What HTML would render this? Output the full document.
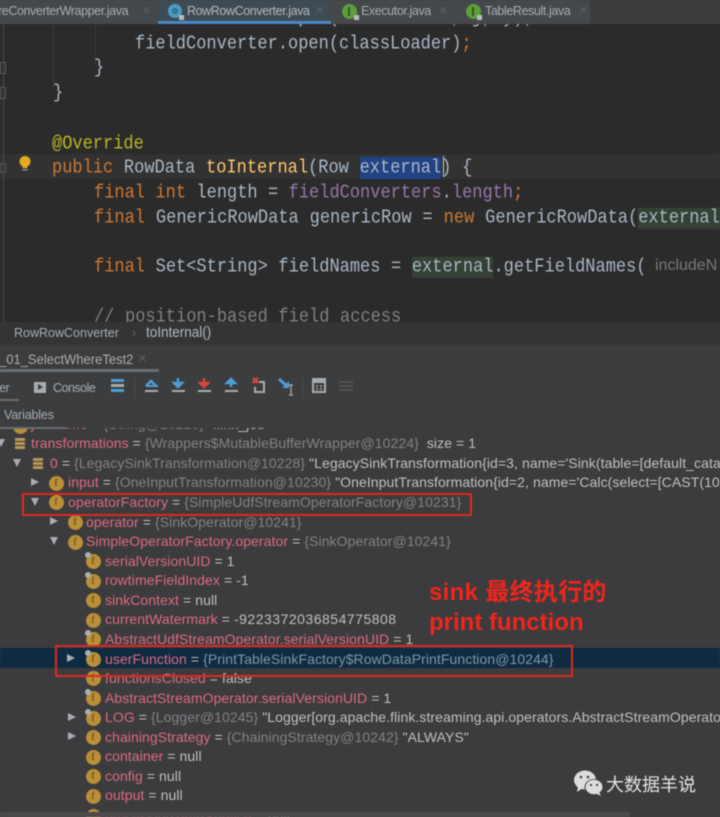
<!DOCTYPE html>
<html><head><meta charset="utf-8">
<style>
html,body{margin:0;padding:0;background:#3c3c3e}
#r{position:relative;width:720px;height:817px;overflow:hidden;background:#3c3c3e;font-family:"Liberation Sans",sans-serif}
#r div{position:absolute;white-space:pre}
.bl{filter:blur(.45px)}
.c{font:17px/24px "Liberation Mono",monospace;color:#a9b7c6;transform:scaleY(1.12);transform-origin:50% 50%;word-spacing:.4px}
.k{color:#cc7832}.p{color:#9876aa}.y{color:#ffc66d}.g{color:#787878}.h{background:#344134}
.t{font-size:12.5px;line-height:16px;color:#a8adb0;letter-spacing:-.4px;transform:scaleY(1.06)}
.x{font-size:15px;line-height:16px;color:#5c6063}
.v{font-size:14px;line-height:18px;color:#c0c0c0;letter-spacing:.08px}
.n{color:#dc6a80}.d{color:#808385}
.a{width:0;height:0;border-left:8px solid #a9adb0;border-top:4.5px solid transparent;border-bottom:4.5px solid transparent}
.o{width:0;height:0;border-top:8px solid #a9adb0;border-left:4.5px solid transparent;border-right:4.5px solid transparent}
.f{width:15px;height:15px;margin:-.5px;border-radius:50%;background:#b98f38;color:#7a5a1e;font:bold 10px/15px "Liberation Serif",serif;text-align:center}
.f.m::before{content:"";position:absolute;left:-1px;top:-2px;width:6px;height:6px;border-radius:50%;background:#a9b0b4}
.s{width:10px;height:3px;background:#b8975a;box-shadow:0 4px 0 #b8975a,0 8px 0 #b8975a}
.box{border:2.5px solid #dc2a20;box-sizing:border-box}
.red{color:#f0261c;font-weight:bold;font-size:24px;line-height:28px;font-family:"Liberation Sans","Noto Sans CJK SC",sans-serif}
</style></head><body><div id="r">
<div class="bl" style="left:0;top:0;width:720px;height:817px">

<!-- editor -->
<div style="left:0;top:0;width:720px;height:322px;background:#2b2b2b"></div>
<div style="left:0;top:154px;width:720px;height:25px;background:#323232"></div>
<div style="left:3px;top:24px;width:1px;height:298px;background:#4a4a4a"></div>
<div style="left:0;top:62px;width:6px;height:12px;border:1px solid #5a5a5a;box-sizing:border-box"></div>
<div style="left:0;top:87px;width:6px;height:12px;border:1px solid #5a5a5a;box-sizing:border-box"></div>
<div style="left:0;top:163px;width:6px;height:10px;border:1px solid #5a5a5a;box-sizing:border-box"></div>
<div style="left:95px;top:24px;width:1px;height:42px;background:#3a3a3a"></div>
<div style="left:53px;top:24px;width:1px;height:66px;background:#3a3a3a"></div>

<div class="c" style="left:135px;top:7px">fieldConverter.open(classLoader<span class="k">,</span> j, y);</div>

<!-- tabs -->
<div style="left:0;top:0;width:590px;height:24px;background:#45484a"></div>
<div style="left:590px;top:0;width:130px;height:24px;background:#3a3c3e"></div>
<div style="left:158px;top:0;width:173px;height:24px;background:#3f4b54"></div>
<div style="left:158px;top:21px;width:173px;height:3px;background:#4a88c7"></div>
<div class="t" style="left:-2px;top:3px">reConverterWrapper.java</div>
<div class="x" style="left:142px;top:3px">×</div>
<div style="left:168px;top:4px;width:14px;height:14px;border-radius:50%;background:#4a9cc4"></div>
<div style="left:172px;top:8px;width:6px;height:6px;border-radius:50%;border:2px solid #2f6d8e;box-sizing:border-box"></div>
<div style="left:179px;top:15px;width:5px;height:5px;background:#b9bcbe"></div>
<div class="t" style="left:187px;top:3px;color:#b4b8ba">RowRowConverter.java</div>
<div class="x" style="left:315px;top:3px">×</div>
<div style="left:342px;top:4px;width:15px;height:15px;border-radius:50%;background:#5f9e3c"></div>
<div style="left:348px;top:7px;width:2px;height:9px;background:#2f5a1e"></div>
<div style="left:354px;top:15px;width:5px;height:5px;background:#b9bcbe"></div>
<div class="t" style="left:361px;top:3px">Executor.java</div>
<div class="x" style="left:439px;top:3px">×</div>
<div style="left:466px;top:4px;width:15px;height:15px;border-radius:50%;background:#5f9e3c"></div>
<div style="left:472px;top:7px;width:2px;height:9px;background:#2f5a1e"></div>
<div style="left:477px;top:15px;width:5px;height:5px;background:#b9bcbe"></div>
<div class="t" style="left:485px;top:3px">TableResult.java</div>
<div class="x" style="left:579px;top:3px">×</div>

<!-- code -->
<div class="c" style="left:135px;top:33px">fieldConverter.open(classLoader)<span class="k">;</span></div>
<div class="c" style="left:94px;top:57px">}</div>
<div class="c" style="left:53px;top:82px">}</div>
<div class="c" style="left:52px;top:133px;color:#bbb529">@Override</div>
<div class="c" style="left:52px;top:157px;word-spacing:.5px"><span class="k">public</span> RowData <span class="y">toInternal</span>(Row <span style="background:#214283;box-shadow:0 -1px 0 #214283">external</span>) {</div>
<div style="left:443px;top:156px;width:1px;height:21px;background:#d0d0d0"></div>
<div class="c" style="left:94px;top:182px;word-spacing:.2px"><span class="k">final int</span> length = <span class="p">fieldConverters</span>.<span class="p">length</span><span class="k">;</span></div>
<div class="c" style="left:94px;top:207px;word-spacing:.7px"><span class="k">final</span> GenericRowData genericRow = <span class="k">new</span> GenericRowData(<span class="h">external</span></div>
<div class="c" style="left:94px;top:256px"><span class="k">final</span> Set&lt;String&gt; fieldNames = <span class="h">external</span>.getFieldNames(</div>
<div class="g" style="left:655px;top:256px;font-size:16px;line-height:20px">includeN</div>
<div class="c" style="left:94px;top:306px;color:#808080">// position-based field access</div>
<!-- bulb -->
<svg style="position:absolute;left:17px;top:155px" width="16" height="18" viewBox="0 0 16 18"><circle cx="8" cy="6.5" r="5.5" fill="#e5a91f"/><rect x="5.5" y="11" width="5" height="2" fill="#e5a91f"/><rect x="5.5" y="14" width="5" height="1.6" fill="#8a8a8a"/></svg>

<!-- breadcrumb -->
<div style="left:0;top:322px;width:720px;height:23px;background:#333436"></div>
<div class="t" style="left:14px;top:325px;color:#a8acae;letter-spacing:0">RowRowConverter</div>
<div class="t" style="left:132px;top:325px;color:#5f6264">›</div>
<div class="t" style="left:146px;top:325px;color:#b4b8ba;font-size:13.5px;letter-spacing:0">toInternal()</div>

<!-- debug header -->
<div style="left:0;top:345px;width:720px;height:25px;background:#3c3c3e"></div>
<div class="t" style="left:-1px;top:352px;color:#a8acae;font-size:13px;letter-spacing:0">_01_SelectWhereTest2</div>
<div class="x" style="left:138px;top:351px">×</div>
<div style="left:0;top:369px;width:159px;height:3px;background:#6b6e70"></div>
<div style="left:0;top:372px;width:720px;height:30px;background:#3c3d3f"></div>
<div class="t" style="left:-1px;top:380px">er</div>
<div style="left:0;top:399px;width:19px;height:2px;background:#6b6e70"></div>
<div style="left:34px;top:382px;width:12px;height:11px;background:#a8abad"></div>
<div style="left:38px;top:384px;width:0;height:0;border-left:5px solid #3c3d3f;border-top:3.5px solid transparent;border-bottom:3.5px solid transparent"></div>
<div class="t" style="left:53px;top:380px;color:#a8acae;letter-spacing:-.5px">Console</div>
<!-- toolbar -->
<svg style="position:absolute;left:108px;top:376px" width="250" height="24" viewBox="0 0 250 24">
<g fill="#4d9ed6"><rect x="3" y="3" width="13" height="3"/><rect x="3" y="13" width="13" height="3"/></g><rect x="3" y="8" width="13" height="3" fill="#a8abad"/>
<path d="M38 10l5-5 5 5" fill="none" stroke="#4d9ed6" stroke-width="2.6"/><path d="M38 10h12" stroke="#4d9ed6" stroke-width="2"/><rect x="37" y="14" width="13" height="2" fill="#a8abad"/>
<path d="M70 2v7M66 7l4 4 4-4z" stroke="#4d9ed6" stroke-width="2.4" fill="#4d9ed6"/><rect x="64" y="14" width="13" height="2" fill="#a8abad"/>
<path d="M96 2v7M92 7l4 4 4-4z" stroke="#d9453c" stroke-width="2.4" fill="#d9453c"/><rect x="90" y="14" width="13" height="2" fill="#a8abad"/>
<path d="M123 11V5M119 7l4-4 4 4z" stroke="#4d9ed6" stroke-width="2.4" fill="#4d9ed6"/><rect x="117" y="14" width="13" height="2" fill="#a8abad"/>
<path d="M145 2l5 5M150 2l-5 5" stroke="#d9453c" stroke-width="2.4"/><path d="M151 6h5v10h-9v-5" fill="none" stroke="#a8abad" stroke-width="2"/>
<path d="M171 3l8 7" stroke="#4d9ed6" stroke-width="3"/><path d="M181 5v7h-7z" fill="#4d9ed6"/><path d="M183 9v10M181 9h4M181 19h4" stroke="#a8abad" stroke-width="1.2"/>
<rect x="205" y="3" width="12" height="13" fill="none" stroke="#a8abad" stroke-width="2"/><rect x="205" y="3" width="12" height="4" fill="#a8abad"/><path d="M208 10h2M212 10h2M208 13h2M212 13h2" stroke="#a8abad" stroke-width="1.6"/>
<path d="M231 6h14M231 10h14M231 14h14" stroke="#58595b" stroke-width="1.4"/>
<rect x="26" y="2" width="1" height="20" fill="#4c4d4f"/><rect x="194" y="2" width="1" height="20" fill="#4c4d4f"/></svg>

<!-- partial row under the Variables strip -->
<div class="f" style="left:13px;top:419px">f</div>
<div class="v" style="left:31px;top:415px"><span class="n">jobName</span> = <span class="d">{String@10220}</span> "flink_job"</div>

<!-- variables -->
<div style="left:0;top:402px;width:720px;height:26px;background:#3c3d3f"></div>
<div class="t" style="left:4px;top:407px;color:#a8acae;letter-spacing:-.15px">Variables</div>
<div style="left:0;top:427px;width:66px;height:2px;background:#6b6e70"></div>

<!-- rows -->
<div class="o" style="left:-3px;top:439px"></div><div class="s" style="left:15px;top:438px"></div>
<div class="v" style="left:31px;top:434px"><span class="n">transformations</span> = <span class="d">{Wrappers$MutableBufferWrapper@10224}</span>  size = 1</div>

<div class="o" style="left:13px;top:459px"></div><div class="s" style="left:33px;top:458px"></div>
<div class="v" style="left:50px;top:454px"><span class="n">0</span> = <span class="d">{LegacySinkTransformation@10228}</span> "LegacySinkTransformation{id=3, name='Sink(table=[default_cata</div>

<div class="a" style="left:31px;top:478px"></div><div class="f" style="left:49px;top:476px">f</div>
<div class="v" style="left:68px;top:473px"><span class="n">input</span> = <span class="d">{OneInputTransformation@10230}</span> "OneInputTransformation{id=2, name='Calc(select=[CAST(10</div>

<div class="o" style="left:31px;top:498px"></div><div class="f" style="left:49px;top:495px">f</div>
<div class="v" style="left:68px;top:493px"><span class="n">operatorFactory</span> = <span class="d">{SimpleUdfStreamOperatorFactory@10231}</span></div>

<div class="a" style="left:50px;top:517px"></div><div class="f" style="left:68px;top:515px">f</div>
<div class="v" style="left:86px;top:513px"><span class="n">operator</span> = <span class="d">{SinkOperator@10241}</span></div>

<div class="o" style="left:50px;top:537px"></div><div class="f" style="left:68px;top:535px">f</div>
<div class="v" style="left:86px;top:532px"><span class="n">SimpleOperatorFactory.operator</span> = <span class="d">{SinkOperator@10241}</span></div>

<div class="f m" style="left:86px;top:554px">f</div>
<div class="v" style="left:105px;top:552px"><span class="n">serialVersionUID</span> = 1</div>
<div class="f m" style="left:86px;top:574px">f</div>
<div class="v" style="left:105px;top:571px"><span class="n">rowtimeFieldIndex</span> = -1</div>
<div class="f" style="left:86px;top:593px">f</div>
<div class="v" style="left:105px;top:591px"><span class="n">sinkContext</span> = null</div>
<div class="f" style="left:86px;top:613px">f</div>
<div class="v" style="left:105px;top:610px"><span class="n">currentWatermark</span> = <span style="letter-spacing:.5px">-9223372036854775808</span></div>
<div class="f m" style="left:86px;top:632px">f</div>
<div class="v" style="left:105px;top:630px"><span class="n">AbstractUdfStreamOperator.serialVersionUID</span> = 1</div>

<div style="left:0;top:648px;width:720px;height:20px;background:#0e2b41"></div>
<div class="a" style="left:67px;top:654px"></div><div class="f m" style="left:86px;top:652px">f</div>
<div class="v" style="left:105px;top:650px"><span class="n">userFunction</span> = <span style="color:#7f95a5">{PrintTableSinkFactory$RowDataPrintFunction@10244}</span></div>

<div class="f" style="left:86px;top:671px">f</div>
<div class="v" style="left:105px;top:669px"><span class="n">functionsClosed</span> = false</div>
<div class="f m" style="left:86px;top:691px">f</div>
<div class="v" style="left:105px;top:689px"><span class="n">AbstractStreamOperator.serialVersionUID</span> = 1</div>
<div class="a" style="left:68px;top:713px"></div><div class="f m" style="left:86px;top:711px">f</div>
<div class="v" style="left:105px;top:708px"><span class="n">LOG</span> = <span class="d">{Logger@10245}</span> "Logger[org.apache.flink.streaming.api.operators.AbstractStreamOperato</div>
<div class="a" style="left:68px;top:732px"></div><div class="f" style="left:86px;top:730px">f</div>
<div class="v" style="left:105px;top:728px"><span class="n">chainingStrategy</span> = <span class="d">{ChainingStrategy@10242}</span> "ALWAYS"</div>
<div class="f" style="left:86px;top:750px">f</div>
<div class="v" style="left:105px;top:747px"><span class="n">container</span> = null</div>
<div class="f" style="left:86px;top:769px">f</div>
<div class="v" style="left:105px;top:767px"><span class="n">config</span> = null</div>
<div class="f" style="left:86px;top:789px">f</div>
<div class="v" style="left:105px;top:786px"><span class="n">output</span> = null</div>
<div class="f" style="left:86px;top:809px">f</div>
<div class="v" style="left:105px;top:808px"><span class="n">processingTimeService</span> = null</div>
<div style="left:0;top:812px;width:720px;height:5px;background:#3c3c3e"></div>
<div style="left:0;top:812px;width:630px;height:5px;background:#4b4b4d"></div>

<!-- annotations -->
<div class="box" style="left:22px;top:493px;width:450px;height:23px"></div>
<div class="box" style="left:55px;top:645px;width:518px;height:32px"></div>
<div class="red" style="left:429px;top:579px;letter-spacing:.3px">sink 最终执行的</div>
<div class="red" style="left:429px;top:609px">print function</div>

<!-- watermark -->
<svg style="position:absolute;left:573px;top:769px" width="32" height="28" viewBox="0 0 32 28">
<ellipse cx="12" cy="11" rx="11" ry="9.5" fill="#dcdcdc"/><path d="M5 17l-1 6 6-4z" fill="#dcdcdc"/>
<ellipse cx="21" cy="18" rx="9.5" ry="8" fill="#3c3c3e"/><ellipse cx="21" cy="18" rx="8.5" ry="7.2" fill="#dcdcdc"/><path d="M26 23l2 4-6-3z" fill="#dcdcdc"/>
<circle cx="8" cy="8" r="1.3" fill="#3c3c3e"/><circle cx="15" cy="8" r="1.3" fill="#3c3c3e"/><circle cx="18" cy="16" r="1.1" fill="#3c3c3e"/><circle cx="24" cy="16" r="1.1" fill="#3c3c3e"/></svg>
<div style="left:606px;top:773px;font:18px/24px 'Liberation Sans','Noto Sans CJK SC',sans-serif;color:#e4e4e4">大数据羊说</div>
</div>
</div></body></html>
